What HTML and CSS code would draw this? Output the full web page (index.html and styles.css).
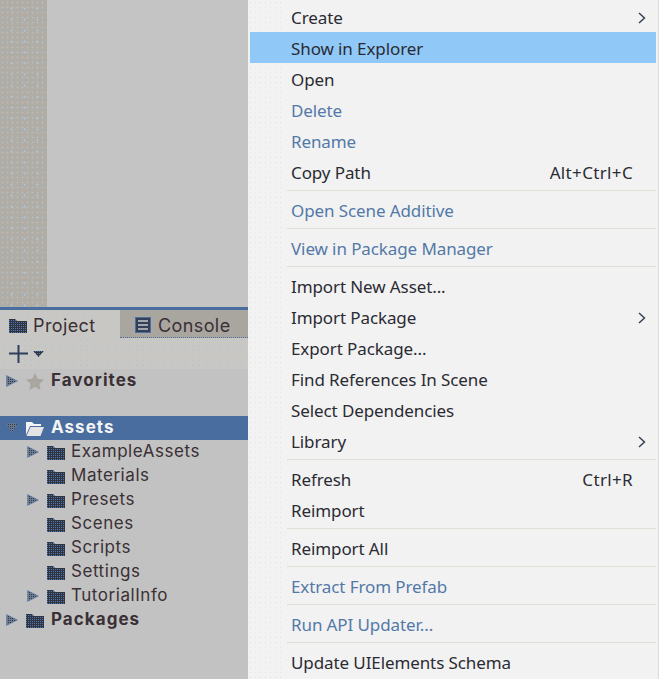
FILE: index.html
```html
<!DOCTYPE html>
<html>
<head>
    <title>Project context menu</title>
    <link rel="stylesheet" href="styles.css">
</head>
<body>
    <svg class="defs" width="0" height="0">
        <defs>
            <pattern id="dither" width="2" height="2" patternUnits="userSpaceOnUse">
                <rect width="2" height="2" fill="#2f3440"/>
                <rect width="1" height="1" fill="#4f78b0"/>
            </pattern>
            <pattern id="dither-light" width="2" height="2" patternUnits="userSpaceOnUse">
                <rect width="2" height="2" fill="#6f7a8e"/>
                <rect width="1" height="1" fill="#2f3848"/>
            </pattern>
        </defs>
        <symbol id="folder" viewBox="0 0 18 15">
            <path d="M0 1h6l2 2h10v12H0z" fill="url(#dither)"/>
        </symbol>
        <symbol id="arrow" viewBox="0 0 12 12">
            <path d="M0.500 0.500L11.500 6L0.500 11.500z" fill="url(#dither-light)" stroke="#5f82b2" stroke-width="0.600"/>
        </symbol>
    </svg>

    <div class="left">
        <div class="scene">
            <div class="scene-strip"></div>
        </div>
        <div class="tabbar">
            <div class="tab tab-active">
                <svg class="tab-icon" width="18" height="15"><use href="#folder"/></svg>
                Project
            </div>
            <div class="tab tab-other">
                <svg class="tab-icon" width="16" height="16" viewBox="0 0 16 16">
                    <rect x="0.500" y="0.500" width="15" height="15" fill="#33405a" stroke="#4d6f9f"/>
                    <path d="M3 4h10M3 8h10M3 12h10" stroke="#c8c8c8" stroke-width="1.500"/>
                </svg>
                Console
            </div>
        </div>
        <div class="toolbar">
            <svg width="19" height="19" viewBox="0 0 19 19">
                <path d="M0 9.500h19M9.500 1v18" stroke="#2f3f5c" stroke-width="2"/>
            </svg>
            <svg width="11" height="6" viewBox="0 0 11 6"><path d="M0 0h11L5.500 6z" fill="url(#dither)"/></svg>
        </div>
        <div class="tree">
            <div class="row row-bold row-first">
                <svg class="arrow" width="12" height="12"><use href="#arrow"/></svg>
                <svg class="icon" width="18" height="17" viewBox="0 0 18 17">
                    <path d="M9 0l2.700 5.800 6.300.8-4.600 4.300 1.200 6.100L9 14l-5.600 3 1.200-6.100L0 6.600l6.300-.8z" fill="#a9a6a0"/>
                </svg>
                Favorites
            </div>
            <div class="row"></div>
            <div class="row row-bold row-selected">
                <svg class="arrow" width="12" height="12" viewBox="0 0 12 12">
                    <path d="M0.500 1.500L11.500 1.500L6 11z" fill="url(#dither-light)"/>
                </svg>
                <svg class="icon" width="18" height="15" viewBox="0 0 18 15">
                    <path d="M0 1h6l2 2h7v2H4L0 14z" fill="#f4f4f4"/>
                    <path d="M4.500 6H18l-3.500 9H0.500z" fill="#e4e4e4"/>
                </svg>
                Assets
            </div>
            <div class="row row-child">
                <svg class="arrow" width="12" height="12"><use href="#arrow"/></svg>
                <svg class="icon" width="18" height="15"><use href="#folder"/></svg>
                ExampleAssets
            </div>
            <div class="row row-child">
                <span class="arrow"></span>
                <svg class="icon" width="18" height="15"><use href="#folder"/></svg>
                Materials
            </div>
            <div class="row row-child">
                <svg class="arrow" width="12" height="12"><use href="#arrow"/></svg>
                <svg class="icon" width="18" height="15"><use href="#folder"/></svg>
                Presets
            </div>
            <div class="row row-child">
                <span class="arrow"></span>
                <svg class="icon" width="18" height="15"><use href="#folder"/></svg>
                Scenes
            </div>
            <div class="row row-child">
                <span class="arrow"></span>
                <svg class="icon" width="18" height="15"><use href="#folder"/></svg>
                Scripts
            </div>
            <div class="row row-child">
                <span class="arrow"></span>
                <svg class="icon" width="18" height="15"><use href="#folder"/></svg>
                Settings
            </div>
            <div class="row row-child">
                <svg class="arrow" width="12" height="12"><use href="#arrow"/></svg>
                <svg class="icon" width="18" height="15"><use href="#folder"/></svg>
                TutorialInfo
            </div>
            <div class="row row-bold">
                <svg class="arrow" width="12" height="12"><use href="#arrow"/></svg>
                <svg class="icon" width="18" height="15"><use href="#folder"/></svg>
                Packages
            </div>
        </div>
    </div>

    <div class="menu">
        <div class="item">Create<svg class="chevron" width="8" height="12" viewBox="0 0 8 12"><path d="M1 1l5.500 5L1 11" fill="none" stroke="#2f3b52" stroke-width="1.400"/></svg></div>
        <div class="item item-hover">Show in Explorer</div>
        <div class="item">Open</div>
        <div class="item item-off">Delete</div>
        <div class="item item-off">Rename</div>
        <div class="item">Copy Path<span class="keys">Alt+Ctrl+C</span></div>
        <div class="sep"></div>
        <div class="item item-off">Open Scene Additive</div>
        <div class="sep"></div>
        <div class="item item-off">View in Package Manager</div>
        <div class="sep"></div>
        <div class="item">Import New Asset...</div>
        <div class="item">Import Package<svg class="chevron" width="8" height="12" viewBox="0 0 8 12"><path d="M1 1l5.500 5L1 11" fill="none" stroke="#2f3b52" stroke-width="1.400"/></svg></div>
        <div class="item">Export Package...</div>
        <div class="item">Find References In Scene</div>
        <div class="item">Select Dependencies</div>
        <div class="item">Library<svg class="chevron" width="8" height="12" viewBox="0 0 8 12"><path d="M1 1l5.500 5L1 11" fill="none" stroke="#2f3b52" stroke-width="1.400"/></svg></div>
        <div class="sep"></div>
        <div class="item">Refresh<span class="keys">Ctrl+R</span></div>
        <div class="item">Reimport</div>
        <div class="sep"></div>
        <div class="item">Reimport All</div>
        <div class="sep"></div>
        <div class="item item-off">Extract From Prefab</div>
        <div class="sep"></div>
        <div class="item item-off">Run API Updater...</div>
        <div class="sep"></div>
        <div class="item">Update UIElements Schema</div>
    </div>
</body>
</html>
```

FILE: styles.css
```css
html, body {
    margin: 0;
    padding: 0;
}

body {
    width: 659px;
    height: 679px;
    overflow: hidden;
    display: flex;
    background-color: #c2c2c2;
}

.defs {
    display: block;
    width: 0;
    height: 0;
}

/* left side: unity panels */
.left {
    width: 248px;
    flex: none;
    font-family: Inter, "Liberation Sans", sans-serif;
    font-size: 17px;
    letter-spacing: 0.55px;
    color: #3a3035;
}

.scene {
    height: 307px;
    background-color: #c4c4c4;
}

.scene-strip {
    width: 47px;
    height: 100%;
    background-color: #b0aca6;
    background-image:
        radial-gradient(circle, #a4cbe8 0.8px, transparent 1.200px),
        radial-gradient(circle, #bfbdb8 0.8px, transparent 1.100px);
    background-size: 13px 11px, 5px 5px;
    background-position: 5px 3px, 0 0;
}

.tabbar {
    height: 31px;
    display: flex;
    box-sizing: border-box;
    border-top: 3px solid #4a6d9f;
    background-color: #c8c6c2;
}

.tab {
    display: flex;
    align-items: center;
    gap: 7px;
    box-sizing: border-box;
    font-size: 18px;
    letter-spacing: 0.4px;
    padding-top: 3px;
}

.tab-active {
    width: 120px;
    padding-left: 9px;
    gap: 6px;
    background-color: #c9c7c3;
    background-image: radial-gradient(circle, #bcd0e0 0.6px, transparent 1px);
    background-size: 7px 5px;
}

.tab-other {
    width: 128px;
    padding-left: 15px;
    background-color: #a9a6a0;
    border-bottom: 1px dotted #4a6d9f;
}

.tab-icon {
    flex: none;
}

.toolbar {
    height: 31px;
    padding-left: 9px;
    display: flex;
    align-items: center;
    gap: 5px;
    box-sizing: border-box;
    background-color: #c9c7c3;
    background-image: radial-gradient(circle, #a5c4e0 0.6px, transparent 1px);
    background-size: 7px 5px;
}

.tree {
    margin-top: -1px;
}

.row {
    height: 24px;
    padding-left: 6px;
    padding-bottom: 2px;
    display: flex;
    align-items: center;
    box-sizing: border-box;
    white-space: nowrap;
}

.row-first {
    padding-bottom: 0;
}

.row-bold {
    font-weight: 700;
    letter-spacing: 1.050px;
}

.row-bold .icon {
    margin-right: 7px;
}

.row-child {
    padding-left: 27px;
}

.row-selected {
    background-color: #4a6d9f;
    color: #f4f4f4;
}

.arrow {
    display: block;
    flex: none;
    width: 12px;
    height: 12px;
    margin-right: 8px;
    margin-top: 2px;
}

.icon {
    flex: none;
    margin-right: 6px;
    margin-top: 2px;
}

/* right side: context menu */
.menu {
    flex: 1;
    box-sizing: border-box;
    padding-top: 1px;
    padding-left: 2px;
    padding-right: 2px;
    border-right: 1px solid #dcdcdc;
    background-color: #f2f2f2;
    background-image:
        linear-gradient(to right, transparent 37px, #f2f2f2 37px),
        radial-gradient(circle, #e2e2e2 0.6px, transparent 0.9px);
    background-size: auto, 5px 5px;
    font-family: "Noto Sans", "Open Sans", sans-serif;
    font-size: 17px;
    letter-spacing: -0.1px;
    color: #2b2b33;
}

.item {
    height: 31px;
    padding-left: 41px;
    padding-right: 23px;
    display: flex;
    align-items: center;
    justify-content: space-between;
    box-sizing: border-box;
    white-space: nowrap;
    position: relative;
    top: 1px;
}

.item-hover {
    top: 0;
    padding-top: 2px;
    background-color: #90c8f8;
}

.item-off {
    color: #5379a8;
}

.keys {
    letter-spacing: 0.35px;
}

.chevron {
    margin-right: -13px;
}

.sep {
    height: 1px;
    margin: 3px 0 3px 37px;
    background-color: #dfdfd8;
}
```
